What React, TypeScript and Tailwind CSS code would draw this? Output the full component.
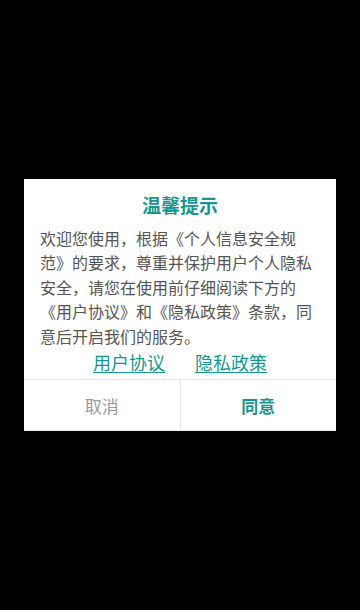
export default function App() {
  return (
    <div
      className="flex min-h-[610px] w-full items-center justify-center bg-black"
      style={{ fontFamily: '"Noto Sans CJK SC", "Noto Sans", sans-serif' }}
    >
      <div className="w-[312px] bg-white">
        <div className="px-4 pt-[13px] pb-[5px]">
          <h2 className="text-center text-[19px] leading-[26px] font-bold text-[#17968f]">
            温馨提示
          </h2>
          <p className="mt-[8px] text-[16px] leading-[24.5px] text-[#555555]">
            欢迎您使用，根据《个人信息安全规范》的要求，尊重并保护用户个人隐私安全，请您在使用前仔细阅读下方的《用户协议》和《隐私政策》条款，同意后开启我们的服务。
          </p>
          <div className="mt-[2px] flex items-center justify-center gap-[30px] text-[18px] leading-[24px] text-[#17968f]">
            <a className="underline underline-offset-2">用户协议</a>
            <a className="underline underline-offset-2">隐私政策</a>
          </div>
        </div>
        <div className="flex h-[52px] border-t border-b border-[#e6e6e6]">
          <button className="flex flex-1 items-center justify-center border-r border-[#e6e6e6] text-[17px] text-[#9a9a9a]">
            取消
          </button>
          <button className="flex flex-1 items-center justify-center text-[17px] font-bold text-[#17968f]">
            同意
          </button>
        </div>
      </div>
    </div>
  )
}
